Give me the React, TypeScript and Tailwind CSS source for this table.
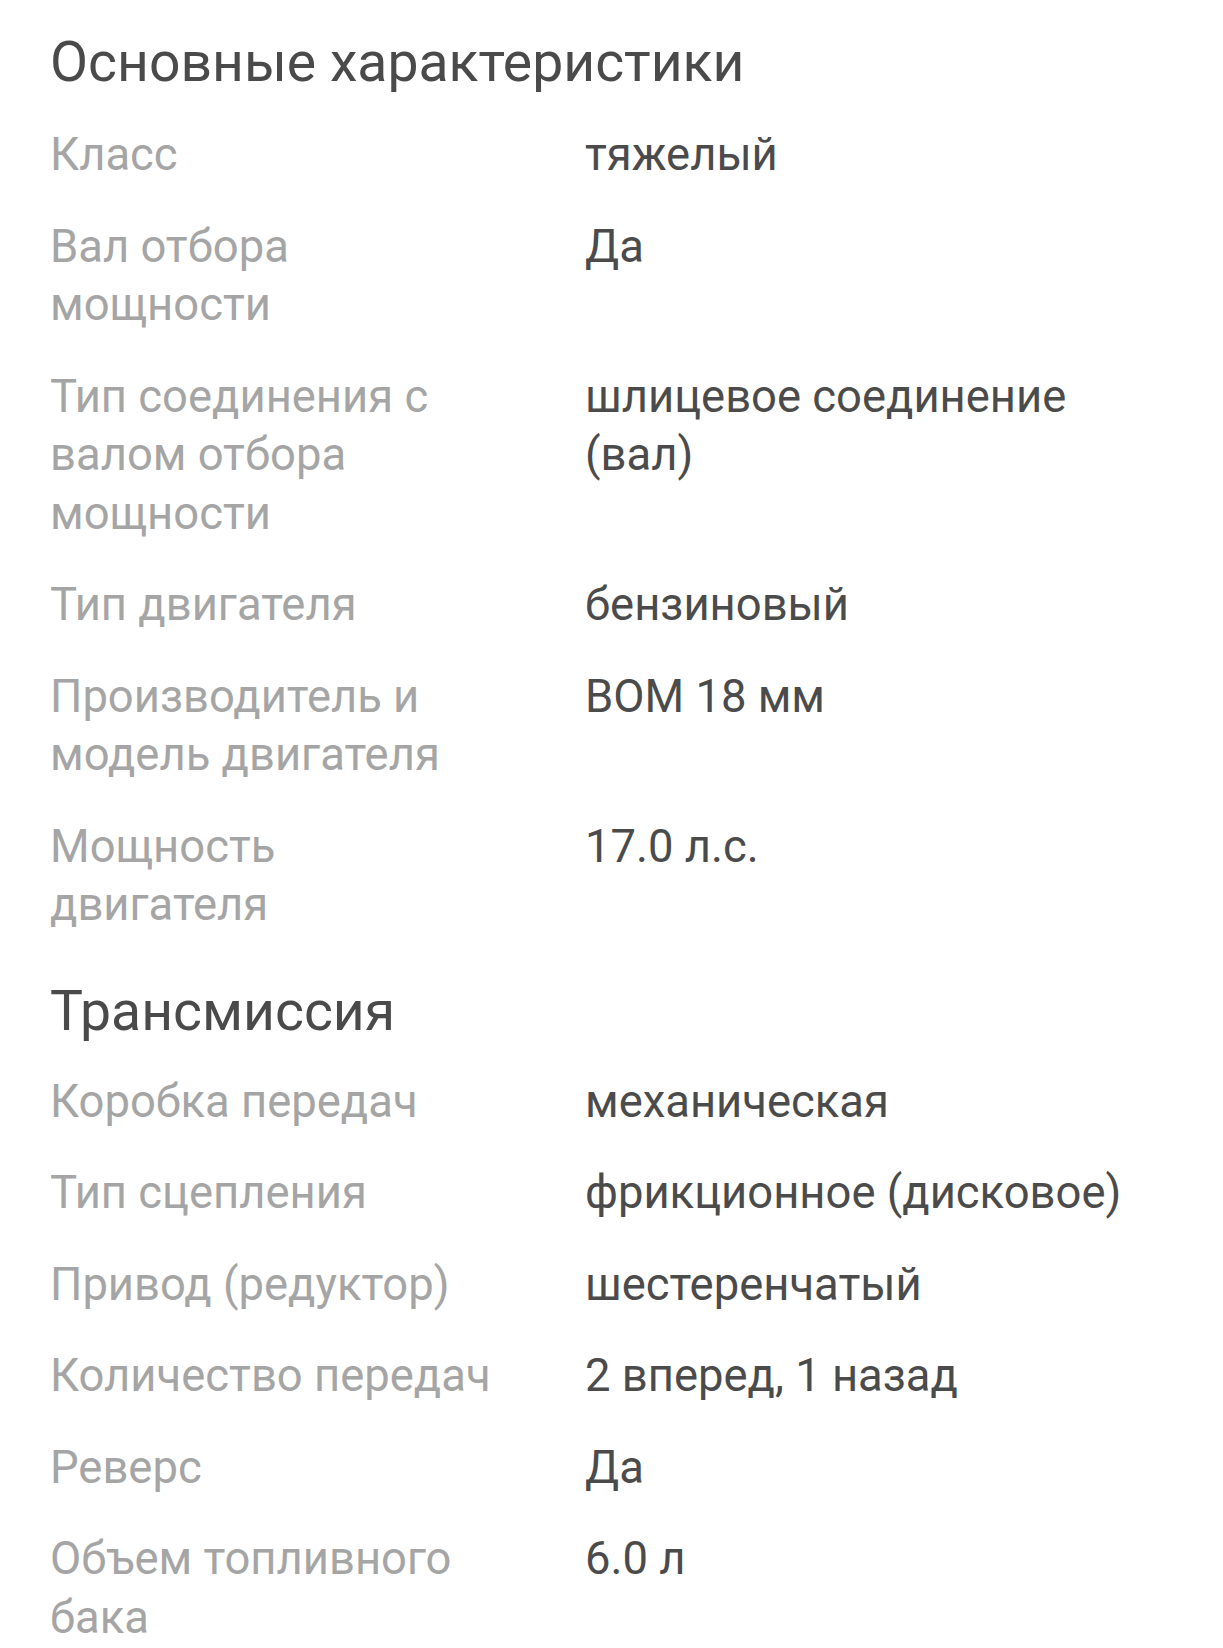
const sections = [
  {
    title: "Основные характеристики",
    rows: [
      ["Класс", "тяжелый"],
      ["Вал отбора мощности", "Да"],
      ["Тип соединения с валом отбора мощности", "шлицевое соединение (вал)"],
      ["Тип двигателя", "бензиновый"],
      ["Производитель и модель двигателя", "BOM 18 мм"],
      ["Мощность двигателя", "17.0 л.с."],
    ],
  },
  {
    title: "Трансмиссия",
    rows: [
      ["Коробка передач", "механическая"],
      ["Тип сцепления", "фрикционное (дисковое)"],
      ["Привод (редуктор)", "шестеренчатый"],
      ["Количество передач", "2 вперед, 1 назад"],
      ["Реверс", "Да"],
      ["Объем топливного бака", "6.0 л"],
    ],
  },
];

const App = () => {
  return (
    <div className="min-h-screen w-full bg-white px-[50px] font-['Roboto',sans-serif]">
      {sections.map((s, i) => (
        <section key={s.title} className={i === 0 ? "pt-[30px]" : "pt-[44px]"}>
          <h2
            className={
              "text-[55.3px] leading-[66px] text-[#4a4a4a] font-normal " +
              (i === 0 ? "mb-[30px]" : "mb-[28px]")
            }
          >
            {s.title}
          </h2>
          <div className="flex flex-col gap-y-[33px]">
            {s.rows.map(([label, value]) => (
              <div key={label} className="grid grid-cols-[446px_1fr] gap-x-[89px] text-[45.4px] leading-[58.5px]">
                <div className="text-[#a5a5a5]">{label}</div>
                <div className="text-[#4b4b4b]">{value}</div>
              </div>
            ))}
          </div>
        </section>
      ))}
    </div>
  );
};

export default App;
